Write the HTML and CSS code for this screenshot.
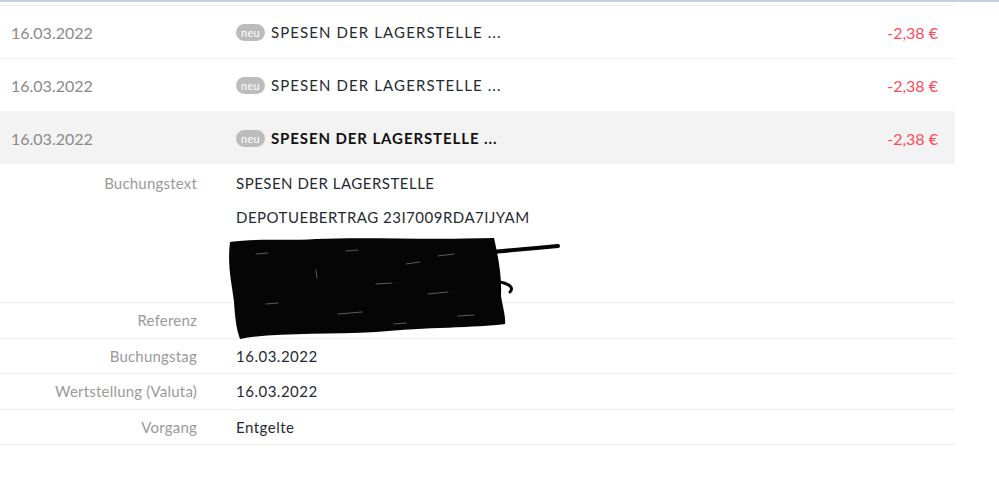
FILE: index.html
```html
<!DOCTYPE html>
<html lang="de">
<head>
  <meta charset="UTF-8">
  <title>Umsätze</title>
  <link rel="stylesheet" href="styles.css">
</head>
<body>

  <div class="topbar"></div>

  <!-- Umsatzliste -->
  <section class="transactions">
    <div class="tx-row">
      <div class="tx-date">16.03.2022</div>
      <div class="tx-text"><span class="badge">neu</span>SPESEN DER LAGERSTELLE ...</div>
      <div class="tx-amount">-2,38 €</div>
    </div>
    <div class="tx-row">
      <div class="tx-date">16.03.2022</div>
      <div class="tx-text"><span class="badge">neu</span>SPESEN DER LAGERSTELLE ...</div>
      <div class="tx-amount">-2,38 €</div>
    </div>
    <div class="tx-row open">
      <div class="tx-date">16.03.2022</div>
      <div class="tx-text"><span class="badge">neu</span>SPESEN DER LAGERSTELLE ...</div>
      <div class="tx-amount">-2,38 €</div>
    </div>

    <!-- Details -->
    <div class="details">
      <div class="detail-row">
        <div class="detail-label">Buchungstext</div>
        <div class="detail-value">
          <p>SPESEN DER LAGERSTELLE</p>
          <p>DEPOTUEBERTRAG 23I7009RDA7IJYAM</p>
          <p>&nbsp;</p>
          <p>&nbsp;</p>
        </div>
      </div>
      <div class="detail-row">
        <div class="detail-label">Referenz</div>
        <div class="detail-value">&nbsp;</div>
      </div>
      <div class="detail-row">
        <div class="detail-label">Buchungstag</div>
        <div class="detail-value">16.03.2022</div>
      </div>
      <div class="detail-row">
        <div class="detail-label">Wertstellung (Valuta)</div>
        <div class="detail-value">16.03.2022</div>
      </div>
      <div class="detail-row">
        <div class="detail-label">Vorgang</div>
        <div class="detail-value">Entgelte</div>
      </div>

      <!-- geschwärzter Bereich -->
      <svg class="redaction" width="340" height="110" viewBox="0 0 340 110">
        <path d="M4 6 C30 2 60 5 90 3 C140 1 200 4 268 2 C272 20 276 40 275 60 C277 72 280 82 279 88 C250 92 200 91 150 96 C100 99 50 96 14 103 C10 92 9 80 8 66 C6 48 1 30 4 6 Z" fill="#050505"/>
        <path d="M266 16 C290 14 310 12 332 10" stroke="#050505" stroke-width="4" fill="none" stroke-linecap="round"/>
        <path d="M274 46 C284 48 288 52 284 56" stroke="#050505" stroke-width="3" fill="none" stroke-linecap="round"/>
        <g stroke="#fff" stroke-width="1" opacity="0.35" stroke-linecap="round">
          <path d="M30 18 L42 17"/>
          <path d="M120 15 L132 14"/>
          <path d="M180 28 L194 26"/>
          <path d="M212 20 L228 18"/>
          <path d="M150 48 L166 47"/>
          <path d="M202 58 L222 56"/>
          <path d="M40 68 L52 67"/>
          <path d="M112 78 L136 76"/>
          <path d="M232 80 L248 79"/>
          <path d="M90 34 L91 42"/>
          <path d="M168 88 L180 87"/>
        </g>
      </svg>
    </div>
  </section>

</body>
</html>
```

FILE: styles.css
```css
/* General Reset */
* {
  margin: 0;
  padding: 0;
  box-sizing: border-box;
}

body {
  font-family: 'Lato', 'Liberation Sans', sans-serif;
  background-color: #fff;
  color: #1f2a33;
  font-size: 15px;
}

.topbar {
  height: 2px;
  background-color: #c4d0e0;
}

/* Transactions */
.transactions {
  width: 955px;
  margin-top: 3px;
}

.tx-row {
  display: flex;
  align-items: center;
  height: 53px;
  border-top: 1px solid #f0f0f0;
  padding: 0 17px 0 11px;
}

.tx-row.open {
  background-color: #f3f3f3;
  border-top-color: #f3f3f3;
}

.tx-date {
  width: 225px;
  color: #8a8a8a;
  font-size: 16px;
}

.tx-text {
  flex: 1;
  display: flex;
  align-items: center;
  letter-spacing: 1.1px;
}

.tx-row.open .tx-text {
  font-weight: bold;
  color: #111;
  letter-spacing: 0.9px;
}

.badge {
  display: inline-block;
  background-color: #bcbcbc;
  color: #fff;
  font-size: 11px;
  font-weight: normal;
  line-height: 17px;
  padding: 0 5px;
  border-radius: 9px;
  margin-right: 6px;
  letter-spacing: 0.3px;
}

.tx-amount {
  color: #ff4b5a;
  font-size: 16px;
}

/* Details */
.details {
  position: relative;
}

.detail-row {
  display: flex;
  padding: 8px 0;
  line-height: 18.5px;
  border-bottom: 1px solid #eeeeee;
}

.detail-row:first-child {
  padding-top: 10px;
  line-height: 18px;
}

.detail-label {
  width: 197px;
  text-align: right;
  color: #9a9a9a;
  letter-spacing: 0.2px;
}

.detail-value {
  margin-left: 39px;
  color: #1f2a33;
  letter-spacing: 0.5px;
}

.detail-value p {
  margin-bottom: 16px;
}

.detail-value p:last-child {
  margin-bottom: 0;
}

/* Schwärzung liegt über den Zeilen */
.redaction {
  position: absolute;
  left: 226px;
  top: 72px;
}
```
